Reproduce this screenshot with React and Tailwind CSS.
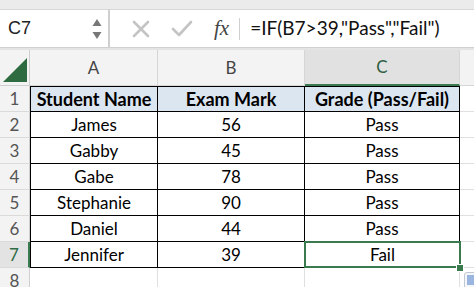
import React from "react";

const rows = [
  ["James", "56", "Pass"],
  ["Gabby", "45", "Pass"],
  ["Gabe", "78", "Pass"],
  ["Stephanie", "90", "Pass"],
  ["Daniel", "44", "Pass"],
  ["Jennifer", "39", "Fail"],
];

function RowHead({ n, selected }) {
  return (
    <div
      className={
        "h-[26px] flex items-center justify-center text-[17px] border-b border-[#dadada] " +
        (selected
          ? "bg-[#e3e3e3] text-[#2f6b45] border-r-2 border-r-[#3b7a4f]"
          : "bg-[#f3f3f3] text-[#555] border-r border-r-[#cfcfcf]")
      }
    >
      {n}
    </div>
  );
}

export default function App() {
  return (
    <div
      className="w-[474px] h-[287px] overflow-hidden bg-white relative"
      style={{ fontFamily: "Lato, 'Open Sans', sans-serif" }}
    >
      {/* top strip */}
      <div className="h-[10px] bg-[#ebebeb] border-b border-[#d6d6d6]" />
      {/* formula bar */}
      <div className="h-[37px] flex bg-white">
        <div
          className="w-[110px] flex items-center justify-between pl-[8px] pr-[6px] border-r-2 border-[#cfcfcf]"
          style={{ fontFamily: "'Liberation Sans', Arial, sans-serif" }}
        >
          <span className="text-[18px] text-[#222]">C7</span>
          <svg width="10" height="22" viewBox="0 0 10 22">
            <path d="M5 1 L9.5 8 L0.5 8 Z" fill="#777" />
            <path d="M5 21 L9.5 14 L0.5 14 Z" fill="#777" />
          </svg>
        </div>
        <div className="flex items-center flex-1">
          <svg width="18" height="18" viewBox="0 0 18 18" className="ml-[22px]">
            <path d="M2 2 L16 16 M16 2 L2 16" stroke="#c4c4c4" strokeWidth="2.6" strokeLinecap="round" />
          </svg>
          <svg width="22" height="18" viewBox="0 0 22 18" className="ml-[21px]">
            <path d="M2 9 L8 15 L20 2" stroke="#c4c4c4" strokeWidth="2.6" fill="none" strokeLinecap="round" strokeLinejoin="round" />
          </svg>
          <span
            className="ml-[21px] text-[21px] italic text-[#444] leading-none"
            style={{ fontFamily: "'Liberation Serif', 'DejaVu Serif', serif" }}
          >
            fx
          </span>
          <div className="ml-[10px] w-px h-[22px] bg-[#d0d0d0]" />
          <span className="ml-[10px] text-[19px] text-[#111]">
            =IF(B7&gt;39,"Pass","Fail")
          </span>
        </div>
      </div>
      {/* strip */}
      <div className="h-[3px] bg-[#e4e4e4] border-t border-[#d0d0d0]" />

      {/* grid */}
      <div className="grid grid-cols-[30px_128px_147px_155px_1fr]">
        {/* header row */}
        <div className="h-[36px] bg-[#f3f3f3] border-r border-b border-[#cfcfcf] flex items-end justify-center pb-[3px]">
          <svg width="24" height="24" viewBox="0 0 24 24">
            <path d="M24 0 L24 24 L0 24 Z" fill="#2e6b41" />
          </svg>
        </div>
        <div className="h-[36px] bg-[#f3f3f3] border-r border-b border-[#d6d6d6] flex items-center justify-center text-[17px] text-[#444]">A</div>
        <div className="h-[36px] bg-[#f3f3f3] border-r border-b border-[#d6d6d6] flex items-center justify-center text-[17px] text-[#444]">B</div>
        <div className="h-[36px] bg-[#e1e1e1] border-r border-[#d6d6d6] border-b-2 border-b-[#3b7a4f] flex items-center justify-center text-[17px] text-[#2f5e42]">C</div>
        <div className="h-[36px] bg-[#f3f3f3] border-b border-[#d6d6d6]" />

        {/* row 1 */}
        <RowHead n="1" />
        <div className="h-[26px] bg-[#dce6f1] border-l border-r border-y border-black flex items-center justify-center text-[18px] font-bold text-black">Student Name</div>
        <div className="h-[26px] bg-[#dce6f1] border-r border-y border-black flex items-center justify-center text-[18px] font-bold text-black">Exam Mark</div>
        <div className="h-[26px] bg-[#dce6f1] border-r border-y border-black flex items-center justify-center text-[18px] font-bold text-black">Grade (Pass/Fail)</div>
        <div className="h-[26px] border-b border-[#e0e0e0]" />

        {rows.map((r, i) => {
          const last = i === rows.length - 1;
          return (
            <React.Fragment key={i}>
              <RowHead n={String(i + 2)} selected={last} />
              <div className="h-[26px] border-l border-r border-b border-black flex items-center justify-center text-[17px] text-black">{r[0]}</div>
              <div className="h-[26px] border-r border-b border-black flex items-center justify-center text-[17px] text-black">{r[1]}</div>
              {last ? (
                <div className="h-[26px] relative flex items-center justify-center text-[17px] text-black">
                  <div className="absolute -left-[1px] -top-[1px] -right-[1px] bottom-0 border-2 border-[#3b7a4f]" />
                  <div className="absolute -right-[4px] -bottom-[4px] w-[8px] h-[8px] bg-[#3b7a4f] border border-white" />
                  {r[2]}
                </div>
              ) : (
                <div className="h-[26px] border-r border-b border-black flex items-center justify-center text-[17px] text-black">{r[2]}</div>
              )}
              <div className="h-[26px] border-b border-[#e0e0e0]" />
            </React.Fragment>
          );
        })}

        {/* row 8 */}
        <RowHead n="8" />
        <div className="h-[26px] border-r border-[#e0e0e0]" />
        <div className="h-[26px] border-r border-[#e0e0e0]" />
        <div className="h-[26px] border-r border-[#e0e0e0]" />
        <div className="h-[26px] relative">
          <div className="absolute left-[4px] top-[4px] w-[20px] h-[20px] rounded-[3px] border border-[#c0c8d4] bg-[#f4f6fa] flex items-start justify-start p-[2px]">
            <div className="w-[8px] h-[10px] bg-[#9ab6e0]" />
          </div>
        </div>
      </div>
    </div>
  );
}
